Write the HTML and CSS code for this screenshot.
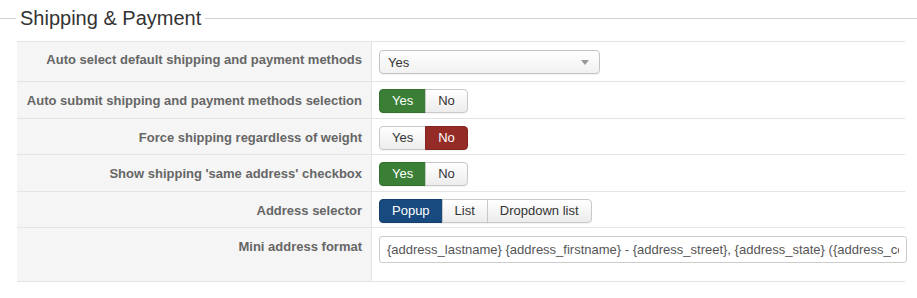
FILE: index.html
```html
<!DOCTYPE html>
<html>
<head>
    <title>Shipping &amp; Payment</title>
    <meta name="viewport" content="width=device-width, initial-scale=1">
    <link rel="stylesheet" href="styles.css">
</head>
<body>
    <div class="options-panel">
        <div class="legend"><span class="legend-text">Shipping &amp; Payment</span></div>
        <div class="fields">
            <div class="field field-select">
                <div class="field-label">Auto select default shipping and payment methods</div>
                <div class="field-control">
                    <div class="select-box">
                        <span>Yes</span>
                        <span class="select-arrow"></span>
                    </div>
                </div>
            </div>
            <div class="field">
                <div class="field-label">Auto submit shipping and payment methods selection</div>
                <div class="field-control">
                    <div class="btn-group">
                        <span class="btn btn-success">Yes</span>
                        <span class="btn">No</span>
                    </div>
                </div>
            </div>
            <div class="field">
                <div class="field-label">Force shipping regardless of weight</div>
                <div class="field-control">
                    <div class="btn-group">
                        <span class="btn">Yes</span>
                        <span class="btn btn-danger">No</span>
                    </div>
                </div>
            </div>
            <div class="field">
                <div class="field-label">Show shipping 'same address' checkbox</div>
                <div class="field-control">
                    <div class="btn-group">
                        <span class="btn btn-success">Yes</span>
                        <span class="btn">No</span>
                    </div>
                </div>
            </div>
            <div class="field">
                <div class="field-label">Address selector</div>
                <div class="field-control">
                    <div class="btn-group">
                        <span class="btn btn-primary">Popup</span>
                        <span class="btn">List</span>
                        <span class="btn">Dropdown list</span>
                    </div>
                </div>
            </div>
            <div class="field field-text">
                <div class="field-label">Mini address format</div>
                <div class="field-control">
                    <input type="text" class="text-input" value="{address_lastname} {address_firstname} - {address_street}, {address_state} ({address_country})">
                </div>
            </div>
        </div>
    </div>
</body>
</html>
```

FILE: styles.css
```css
html, body {
    margin: 0;
    padding: 0;
}
body {
    font-family: 'Liberation Sans', Arial, sans-serif;
    font-size: 13px;
    color: #333;
    background: #fff;
}
.options-panel {
    width: 917px;
    padding-top: 6px;
}
.legend {
    display: flex;
    align-items: center;
    gap: 4px;
    height: 24px;
}
.legend::before,
.legend::after {
    content: "";
    height: 1px;
    background: #cfcfcf;
}
.legend::before {
    width: 16px;
}
.legend::after {
    flex: 1;
}
.legend-text {
    font-size: 20px;
    line-height: 24px;
    color: #333;
}
.fields {
    width: 888px;
    margin: 11px 0 0 17px;
    border-bottom: 1px solid #e4e4e4;
}
.field {
    display: grid;
    grid-template-columns: 355px 1fr;
    border-top: 1px solid #e4e4e4;
}
.field-label {
    background: #f5f5f5;
    border-right: 1px solid #e4e4e4;
    padding: 10px 9px 0 0;
    text-align: right;
    font-weight: bold;
    line-height: 18px;
    color: #666;
}
.field-control {
    padding: 7px 0 4.5px 7px;
}
.field-select .field-control {
    padding: 8px 0 7px 7px;
}
.field-select .field-label {
    padding-top: 9px;
}
.field-text .field-control {
    padding: 8px 0 18px 7px;
}
.select-box {
    width: 203px;
    height: 22px;
    padding: 0 8px;
    border: 1px solid #c4c4c4;
    border-radius: 4px;
    background: linear-gradient(#ffffff, #f1f1f1);
    display: flex;
    align-items: center;
    justify-content: space-between;
    color: #333;
    box-shadow: 0 1px 1px rgba(0, 0, 0, 0.06);
}
.select-arrow {
    width: 0;
    height: 0;
    border-left: 4px solid transparent;
    border-right: 4px solid transparent;
    border-top: 5px solid #999;
    margin-right: 2px;
}
.btn-group {
    display: flex;
}
.btn {
    height: 22px;
    line-height: 22px;
    padding: 0 12px;
    border: 1px solid #c8c8c8;
    background: linear-gradient(#ffffff, #ececec);
    color: #333;
    box-shadow: 0 1px 1px rgba(0, 0, 0, 0.05);
}
.btn + .btn {
    margin-left: -1px;
}
.btn:first-child {
    border-radius: 4px 0 0 4px;
}
.btn:last-child {
    border-radius: 0 4px 4px 0;
}
.btn-success {
    background: #3a7f35;
    border-color: #336f2f;
    color: #fff;
}
.btn-danger {
    background: #952b26;
    border-color: #852521;
    color: #fff;
}
.btn-primary {
    background: #184a7f;
    border-color: #143f6d;
    color: #fff;
}
.text-input {
    display: block;
    box-sizing: border-box;
    width: 528px;
    height: 27px;
    padding: 0 7px;
    border: 1px solid #ccc;
    border-radius: 3px;
    font-family: inherit;
    font-size: 13px;
    color: #555;
    outline: none;
}
```
